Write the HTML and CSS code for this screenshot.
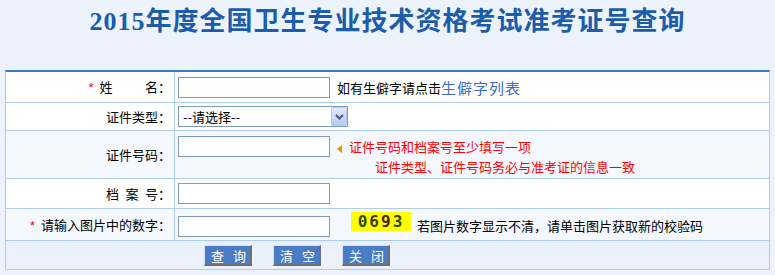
FILE: index.html
```html
<!DOCTYPE html>
<html lang="zh-CN">

<head>
    <meta charset="UTF-8">
    <title>准考证号查询</title>
    <link rel="stylesheet" href="styles.css">
</head>

<body>
    <div class="page-title">2015年度全国卫生专业技术资格考试准考证号查询</div>

    <table class="query-form">
        <!-- 姓名 -->
        <tr class="row-name">
            <td class="label"><span class="req">*</span>姓&emsp;&emsp;&ensp;名：</td>
            <td class="field"><input type="text" class="txt"><span class="tip">如有生僻字请点击</span><a href="#" class="rare-link">生僻字列表</a></td>
        </tr>

        <!-- 证件类型 -->
        <tr class="row-type">
            <td class="label">证件类型：</td>
            <td class="field">
                <span class="select-wrap">
                    <select class="id-type">
                        <option>--请选择--</option>
                    </select>
                    <span class="select-btn">
                        <svg width="9" height="6" viewBox="0 0 9 6"><path d="M1 1 L4.5 4.5 L8 1" fill="none" stroke="#4a5a7e" stroke-width="2"/></svg>
                    </span>
                </span>
            </td>
        </tr>

        <!-- 证件号码 -->
        <tr class="row-idno tint">
            <td class="label">证件号码：</td>
            <td class="field top"><input type="text" class="txt"><span class="hint"><span class="arrow"></span>证件号码和档案号至少填写一项</span>
                <div class="hint hint-2">证件类型、证件号码务必与准考证的信息一致</div>
            </td>
        </tr>

        <!-- 档案号 -->
        <tr class="row-file">
            <td class="label">档&ensp;案&ensp;号：</td>
            <td class="field"><input type="text" class="txt"></td>
        </tr>

        <!-- 验证码 -->
        <tr class="row-code tint">
            <td class="label"><span class="req">*</span>请输入图片中的数字：</td>
            <td class="field"><input type="text" class="txt"><span class="captcha"><b class="d1">0</b><b class="d2">6</b><b class="d3">9</b><b class="d4">3</b></span><span class="tip">若图片数字显示不清，请单击图片获取新的校验码</span></td>
        </tr>

        <!-- 按钮 -->
        <tr class="row-btns">
            <td colspan="2" class="btns"><button class="btn">查询</button><button class="btn">清空</button><button class="btn">关闭</button></td>
        </tr>
    </table>
</body>

</html>
```

FILE: styles.css
```css
body {
    margin: 0;
    padding: 0;
    background-color: #edf3fc;
    font-family: "Noto Sans CJK SC", sans-serif;
    font-size: 13px;
    color: #000;
}

.page-title {
    height: 44px;
    line-height: 44px;
    margin-bottom: 26px;
    text-align: center;
    font-family: "Liberation Serif", "Noto Sans CJK SC", serif;
    font-size: 26px;
    font-weight: bold;
    letter-spacing: 1px;
    color: #1c5dab;
}

.query-form {
    width: 765px;
    margin-left: 5px;
    border-collapse: separate;
    border-spacing: 0;
    border-top: 2px solid #3b7bc9;
    border-left: 1px solid #aecbf0;
    border-right: 1px solid #aecbf0;
    border-bottom: 1px solid #aecbf0;
    background-color: #fff;
}

.query-form td {
    box-sizing: border-box;
    padding: 0;
    border-bottom: 1px solid #aecbf0;
    vertical-align: middle;
    line-height: 19px;
}

.query-form td.label {
    width: 169px;
    padding-right: 3px;
    text-align: right;
    border-right: 1px solid #aecbf0;
}

.query-form td.field {
    padding-left: 3px;
}

.query-form td.top {
    vertical-align: top;
    padding-top: 4px;
}

.tint td {
    background-color: #f5f9ff;
}

.row-name td { height: 31px; }
.row-type td { height: 28px; }
.row-idno td { height: 48px; }
.row-file td { height: 30px; }
.row-code td { height: 32px; }

.row-btns td {
    height: 28px;
    border-bottom: none;
    background-color: #eaf1fb;
}

.req {
    color: #f00;
    font-family: "Liberation Sans", sans-serif;
    margin-right: 6px;
}

.txt {
    box-sizing: border-box;
    width: 152px;
    height: 21px;
    margin: 0;
    padding: 0 3px;
    border: 1px solid #7f9db9;
    background: #fff;
    vertical-align: middle;
}

.tip {
    margin-left: 7px;
    vertical-align: middle;
}

.rare-link {
    font-size: 15px;
    letter-spacing: 1px;
    color: #3b6fc3;
    text-decoration: none;
    vertical-align: middle;
}

.select-wrap {
    position: relative;
    display: inline-block;
    vertical-align: middle;
}

.id-type {
    box-sizing: border-box;
    width: 170px;
    height: 21px;
    margin: 0;
    padding: 0 0 0 4px;
    border: 1px solid #7f9db9;
    background: #fff;
    font-family: "Noto Sans CJK SC", sans-serif;
    font-size: 13px;
    color: #000;
    appearance: none;
    -webkit-appearance: none;
    vertical-align: top;
}

.select-btn {
    position: absolute;
    top: 1px;
    right: 1px;
    box-sizing: border-box;
    width: 16px;
    height: 19px;
    border: 1px solid #b6c6ef;
    border-radius: 2px;
    background: linear-gradient(#e0e9fc, #b9cbf3);
    display: flex;
    align-items: center;
    justify-content: center;
}

.hint {
    color: #f00;
    vertical-align: middle;
    margin-left: 7px;
}

.hint .arrow {
    display: inline-block;
    width: 0;
    height: 0;
    border-top: 4px solid transparent;
    border-bottom: 4px solid transparent;
    border-right: 5px solid #f08a00;
    margin-right: 7px;
    vertical-align: -1px;
}

.hint-2 {
    margin-left: 197px;
    line-height: 19px;
}

.captcha {
    display: inline-block;
    overflow: hidden;
    width: 60px;
    height: 19px;
    margin-left: 21px;
    background-color: #ffff00;
    font-family: "DejaVu Sans Mono", monospace;
    font-size: 16px;
    line-height: 19px;
    letter-spacing: 2px;
    text-align: center;
}

.captcha b { font-weight: bold; }
.captcha .d1 { color: #2b4a12; }
.captcha .d2 { color: #3a3a10; }
.captcha .d3 { color: #4a2010; }
.captcha .d4 { color: #2c4a1a; }

.captcha + .tip {
    margin-left: 6px;
    vertical-align: baseline;
}

.btns {
    padding-left: 198px !important;
}

.btn {
    box-sizing: border-box;
    width: 48px;
    height: 21px;
    margin: 0 21px 0 0;
    padding: 0 0 0 6px;
    border-style: solid;
    border-width: 1px 2px 2px 1px;
    border-color: #d6e2f3 #707070 #707070 #d6e2f3;
    background-color: #4a7bc5;
    color: #fff;
    font-family: "Noto Sans CJK SC", sans-serif;
    font-size: 13px;
    letter-spacing: 9px;
    white-space: nowrap;
    overflow: visible;
    text-align: left;
    vertical-align: middle;
    cursor: pointer;
}
```
